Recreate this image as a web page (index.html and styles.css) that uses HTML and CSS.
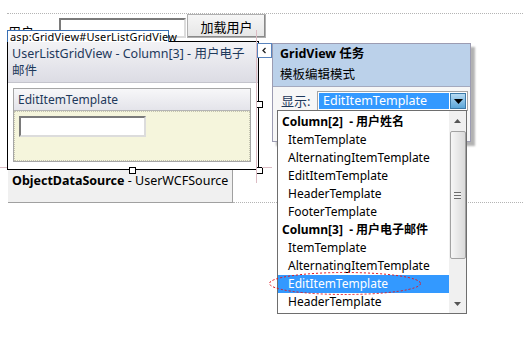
FILE: index.html
```html
<!DOCTYPE html>
<html lang="zh-CN">
<head>
    <meta charset="UTF-8">
    <meta name="viewport" content="width=device-width, initial-scale=1.0">
    <link rel="stylesheet" href="styles.css">
    <title>GridView 任务</title>
</head>
<body>
<div class="page">
    <div class="design">
        <div class="toolbar">
            <label class="user-label" for="userName">用户:</label>
            <input id="userName" class="text-box" type="text">
            <button type="button" class="load-btn">加载用户</button>
        </div>

        <div class="grid">
            <div class="grid-head">UserListGridView - Column[3] - 用户电子<br>邮件</div>
            <div class="tpl">
                <div class="tpl-title">EditItemTemplate</div>
                <div class="tpl-body">
                    <input class="text-box small" type="text">
                </div>
            </div>
            <span class="handle h-right"></span>
            <span class="handle h-bottom"></span>
            <span class="handle h-corner"></span>
        </div>

        <div class="ods-row">
            <div class="ods"><b>ObjectDataSource</b> - UserWCFSource</div>
            <div class="dots"></div>
        </div>
    </div>

    <!-- cell guides of the design surface -->
    <span class="guide guide-v"></span>
    <span class="guide guide-h1"></span>
    <span class="guide guide-h2"></span>

    <div class="tag">asp:GridView#UserListGridView</div>

    <button type="button" class="collapse-btn">
        <svg width="7" height="7" viewBox="0 0 7 7"><polyline points="4.5,1 2,3.5 4.5,6" fill="none" stroke="#222" stroke-width="1.3"/></svg>
    </button>

    <div class="tasks">
        <div class="tasks-head">
            <div class="tasks-title">GridView 任务</div>
            <div class="tasks-sub">模板编辑模式</div>
        </div>
        <div class="tasks-body">
            <span class="show-label">显示:</span>
            <div class="select">
                <span class="select-value">EditItemTemplate</span>
                <span class="select-arrow">
                    <svg width="9" height="5" viewBox="0 0 9 5"><polygon points="0,0 9,0 4.5,5" fill="#000"/></svg>
                </span>
            </div>
        </div>
    </div>

    <div class="listbox">
        <div class="options">
            <div class="opt group">Column[2]&nbsp; - 用户姓名</div>
            <div class="opt">ItemTemplate</div>
            <div class="opt">AlternatingItemTemplate</div>
            <div class="opt">EditItemTemplate</div>
            <div class="opt">HeaderTemplate</div>
            <div class="opt">FooterTemplate</div>
            <div class="opt group">Column[3]&nbsp; - 用户电子邮件</div>
            <div class="opt">ItemTemplate</div>
            <div class="opt">AlternatingItemTemplate</div>
            <div class="opt selected">EditItemTemplate</div>
            <div class="opt">HeaderTemplate</div>
        </div>
        <div class="scrollbar">
            <div class="sb-btn">
                <svg width="7" height="4" viewBox="0 0 7 4"><polygon points="0,4 7,4 3.5,0" fill="#555"/></svg>
            </div>
            <div class="sb-thumb">
                <span class="grip"></span>
            </div>
            <div class="sb-space"></div>
            <div class="sb-btn">
                <svg width="7" height="4" viewBox="0 0 7 4"><polygon points="0,0 7,0 3.5,4" fill="#555"/></svg>
            </div>
        </div>
    </div>

    <svg class="mark" width="154" height="25" viewBox="0 0 154 25">
        <ellipse cx="77" cy="12.5" rx="75.5" ry="11" fill="none" stroke="#e3141e" stroke-width="1" stroke-dasharray="2 2"/>
    </svg>
</div>
</body>
</html>
```

FILE: styles.css
```css
body {
    margin: 0;
    background: #fff;
    color: #000;
    font-family: "Noto Sans", "Noto Sans CJK SC", sans-serif;
    font-size: 12px;
    line-height: 18px;
}

.page {
    position: relative;
    width: 528px;
    height: 341px;
    overflow: hidden;
}

.design {
    padding: 13px 0 0 7px;
}

/* top row */
.toolbar {
    display: flex;
    align-items: flex-end;
    height: 24px;
    width: 516px;
    border-top: 1px dotted #b4b4b4;
}

.user-label {
    width: 51px;
    padding-left: 1px;
    font-size: 13px;
    line-height: 20px;
    align-self: flex-start;
    margin-top: 8px;
}

.text-box {
    box-sizing: border-box;
    width: 127px;
    height: 20px;
    margin: 0;
    padding: 0;
    background: #fff;
    border: 2px solid;
    border-color: #7a7a7a #dcdcdc #dcdcdc #7a7a7a;
}

.load-btn {
    box-sizing: border-box;
    width: 79px;
    height: 24px;
    margin: 0 0 0 1px;
    padding: 0;
    font-family: "Noto Sans CJK SC", sans-serif;
    font-size: 13px;
    color: #000;
    background: linear-gradient(#f6f6f6, #e6e6e6);
    border: 1px solid #b0b0b0;
    box-shadow: inset -1px -1px #8a8a8a;
}

/* gridview */
.grid {
    position: relative;
    box-sizing: border-box;
    width: 252px;
    height: 129px;
    margin-top: 3px;
    border: 1px solid #000;
}

.grid-head {
    height: 37px;
    padding: 3px 0 0 4px;
    color: #1e395b;
    font-size: 12.5px;
    line-height: 17px;
    background: linear-gradient(#f3f3f6, #dcdce4);
    border-bottom: 1px solid #c4c4cc;
}

.tpl {
    margin: 5px 7px 0 5px;
    border: 1px solid #a6a6a6;
}

.tpl-title {
    height: 21px;
    padding-left: 4px;
    line-height: 21px;
    color: #1e395b;
    background: linear-gradient(#f7f7f9, #e4e4ea);
    border-bottom: 1px solid #b4b4b4;
}

.tpl-body {
    height: 44px;
    padding: 4px 0 0 4px;
    background: #f5f5dc;
    border: 1px dotted #c4c4b0;
}

.text-box.small {
    height: 21px;
}

.handle {
    position: absolute;
    width: 7px;
    height: 7px;
    box-sizing: border-box;
    background: #fff;
    border: 1px solid #000;
}

.h-right { right: -5px; top: 59px; }
.h-bottom { left: 121px; bottom: -5px; }
.h-corner { right: -5px; bottom: -5px; }

/* object data source */
.ods-row {
    display: flex;
    align-items: flex-end;
    width: 516px;
}

.ods {
    box-sizing: border-box;
    width: 225px;
    height: 33px;
    margin-left: 1px;
    padding: 2px 0 0 4px;
    font-size: 12.5px;
    background: #f0f0f0;
    border-right: 1px solid #a0a0a0;
    border-bottom: 1px solid #a0a0a0;
}

.dots {
    flex: 1;
    border-bottom: 1px dotted #b4b4b4;
}

.guide {
    position: absolute;
    background: #dcbcc4;
}

.guide-v { left: 256px; top: 30px; width: 1px; height: 153px; }
.guide-h1 { left: 0; top: 167px; width: 7px; height: 1px; }
.guide-h2 { left: 262px; top: 167px; width: 10px; height: 1px; }

.tag {
    position: absolute;
    left: 7px;
    top: 30px;
    box-sizing: border-box;
    width: 162px;
    height: 12px;
    padding-left: 2px;
    font-size: 11px;
    line-height: 11px;
    letter-spacing: 0.15px;
    background: #fff;
    border: 1px solid #3a70b4;
    border-bottom: none;
    white-space: nowrap;
}

.collapse-btn {
    position: absolute;
    left: 257px;
    top: 43px;
    box-sizing: border-box;
    width: 15px;
    height: 15px;
    margin: 0;
    padding: 0;
    display: flex;
    align-items: center;
    justify-content: center;
    background: #fff;
    border: 1px solid #5883bd;
}

/* smart tag panel */
.tasks {
    position: absolute;
    left: 272px;
    top: 43px;
    box-sizing: border-box;
    width: 199px;
    height: 99px;
    background: #f7f7f7;
    border: 1px solid #9c9cb2;
    box-shadow: 4px 4px 2px rgba(0, 0, 0, 0.3);
}

.tasks-head {
    height: 42px;
    padding-left: 7px;
    background: #bbd1ea;
    border-bottom: 1px solid #a4aabf;
    font-size: 12.5px;
}

.tasks-title {
    padding-top: 1px;
    font-weight: bold;
}

.tasks-sub {
    margin-top: 3px;
}

.tasks-body {
    display: flex;
    align-items: center;
    padding: 4px 0 0 8px;
}

.show-label {
    width: 36px;
    color: #1e395b;
    font-size: 13px;
}

.select {
    display: flex;
    box-sizing: border-box;
    width: 151px;
    height: 20px;
    padding: 1px;
    background: #fff;
    border: 1px solid #a4a4a4;
}

.select-value {
    flex: 1;
    padding-left: 4px;
    line-height: 16px;
    font-size: 12.5px;
    color: #fff;
    background: #3399ff;
}

.select-arrow {
    box-sizing: border-box;
    width: 16px;
    height: 16px;
    margin-left: 1px;
    display: flex;
    align-items: center;
    justify-content: center;
    background: linear-gradient(#b6daf2, #5ba6d8);
    border: 1px solid #3c7aa8;
}

/* drop-down list */
.listbox {
    position: absolute;
    left: 277px;
    top: 110px;
    box-sizing: border-box;
    width: 190px;
    height: 204px;
    display: flex;
    background: #fff;
    border: 1px solid #6e6e6e;
}

.options {
    flex: 1;
    padding-top: 2px;
}

.opt {
    height: 18px;
    padding-left: 10px;
    white-space: nowrap;
}

.opt.group {
    padding-left: 4px;
    font-weight: bold;
}

.opt.selected {
    color: #fff;
    background: #3399ff;
}

.scrollbar {
    width: 17px;
    display: flex;
    flex-direction: column;
    align-items: center;
    background: #f0f0f0;
}

.sb-btn {
    height: 19px;
    display: flex;
    align-items: center;
    justify-content: center;
}

.sb-thumb {
    box-sizing: border-box;
    width: 16px;
    height: 128px;
    margin-top: 1px;
    display: flex;
    align-items: center;
    justify-content: center;
    background: linear-gradient(to right, #f6f6f6, #dadada);
    border: 1px solid #a2a2a2;
    border-radius: 2px;
}

.grip {
    width: 7px;
    height: 5px;
    border-top: 1px solid #6c6c6c;
    border-bottom: 1px solid #6c6c6c;
    background: linear-gradient(#f0f0f0 2px, #6c6c6c 2px, #6c6c6c 3px, #f0f0f0 3px);
}

.sb-space {
    flex: 1;
}

.mark {
    position: absolute;
    left: 268px;
    top: 271px;
}
```
